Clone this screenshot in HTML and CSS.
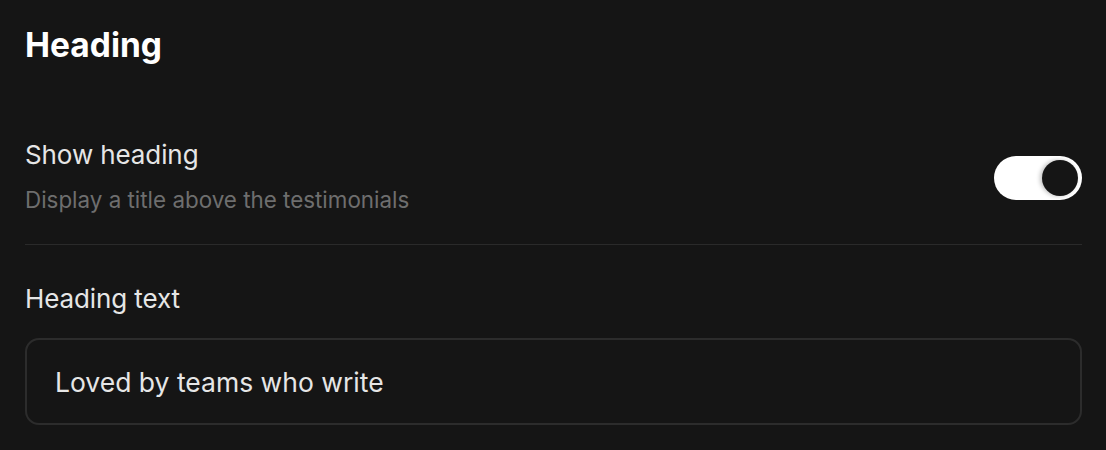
FILE: index.html
```html
<!DOCTYPE html>
<html>
<head>
<meta charset="utf-8">
<link rel="stylesheet" href="styles.css">
</head>
<body>
<div class="panel">
  <h1 class="title">Heading</h1>
  <div class="row">
    <div class="row-text">
      <div class="label">Show heading</div>
      <div class="desc">Display a title above the testimonials</div>
    </div>
    <div class="toggle"><div class="knob"></div></div>
  </div>
  <div class="field">
    <div class="label">Heading text</div>
    <div class="input">Loved by teams who write</div>
  </div>
</div>
</body>
</html>
```
FILE: styles.css
```css
html, body {
  margin: 0;
  padding: 0;
  background: #151515;
}
body {
  font-family: Inter, "Noto Sans", sans-serif;
  color: #ececec;
}
.panel {
  padding: 23px 24px 0 25px;
  display: flex;
  flex-direction: column;
}
.title {
  margin: 0;
  font-size: 33.5px;
  font-weight: 700;
  line-height: 44px;
  color: #ffffff;
  letter-spacing: 0;
}
.row {
  margin-top: 72px;
  display: flex;
  align-items: flex-start;
  justify-content: space-between;
  padding-bottom: 31px;
  border-bottom: 1px solid #2a2a2a;
}
.label {
  font-size: 26px;
  line-height: 32px;
  color: #e6e6e6;
  letter-spacing: -0.1px;
}
.desc {
  margin-top: 16px;
  font-size: 22.4px;
  line-height: 26px;
  color: #6e6e6e;
}
.toggle {
  margin-top: 17px;
  width: 88px;
  height: 44px;
  border-radius: 22px;
  background: #ffffff;
  display: flex;
  align-items: center;
  justify-content: flex-end;
  padding-right: 4px;
  box-sizing: border-box;
}
.knob {
  width: 36px;
  height: 36px;
  border-radius: 50%;
  background: #151515;
  box-shadow: -2px 0 4px rgba(0,0,0,0.25);
}
.field {
  padding-top: 38px;
}
.input {
  margin-top: 23px;
  height: 87px;
  box-sizing: border-box;
  border: 2px solid #2c2c2c;
  border-radius: 14px;
  padding: 0 28px;
  display: flex;
  align-items: center;
  font-size: 26.5px;
  color: #e6e6e6;
}
```
